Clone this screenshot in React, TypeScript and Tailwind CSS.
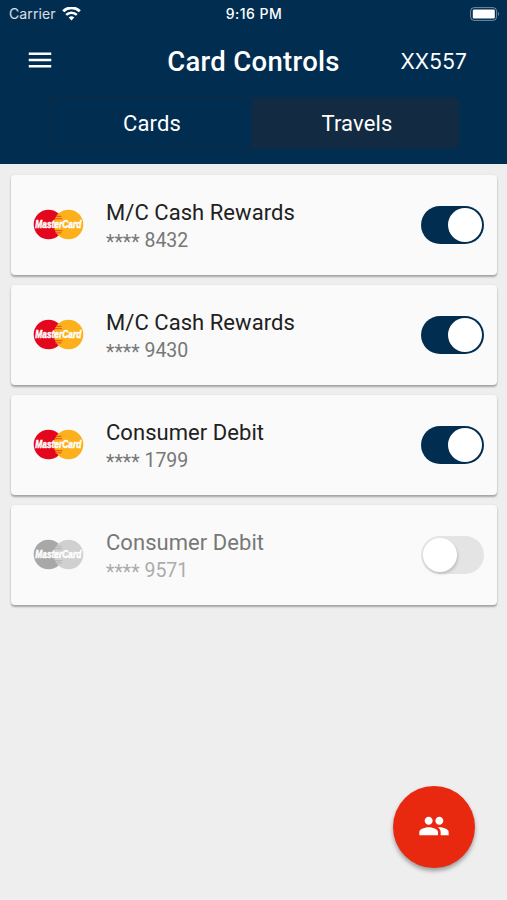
import React, { useState } from 'react';
import { MdMenu, MdPeople } from 'react-icons/md';

interface Card {
  name: string;
  digits: string;
  active: boolean;
}

const initialCards: Card[] = [
  { name: 'M/C Cash Rewards', digits: '8432', active: true },
  { name: 'M/C Cash Rewards', digits: '9430', active: true },
  { name: 'Consumer Debit', digits: '1799', active: true },
  { name: 'Consumer Debit', digits: '9571', active: false },
];

const StatusBar: React.FC = () => (
  <div className="grid grid-cols-3 items-center h-[27px] pl-[9px] pr-[7px] text-[14px]">
    <div className="flex items-center gap-[6px]">
      <span className="font-['Inter',sans-serif] text-[14px] tracking-[0.1px] text-white/85">Carrier</span>
      <svg width="19" height="14" viewBox="0 0 19 14" fill="none" stroke="white" strokeWidth="2.9">
        <path d="M1.2 4.2a12 12 0 0 1 16.6 0" />
        <path d="M4.2 7.8a7.6 7.6 0 0 1 10.6 0" strokeWidth="2.5" />
        <path d="M9.5 13.4 6.7 10.5a4 4 0 0 1 5.6 0z" fill="white" stroke="none" />
      </svg>
    </div>
    <span className="pr-px text-center font-['Inter',sans-serif] text-[14px] font-medium tracking-[0.5px]">
      9:16 PM
    </span>
    <svg className="justify-self-end" width="30" height="14" viewBox="0 0 30 14">
      <rect x="0.6" y="0.6" width="26" height="12.8" rx="3.6" fill="none" stroke="#fff" strokeOpacity="0.45" />
      <rect x="2.8" y="2.4" width="22" height="9.2" rx="1.4" fill="#fff" />
      <path d="M28 4.8q2 2.2 0 4.4z" fill="#fff" fillOpacity="0.45" />
    </svg>
  </div>
);

const MasterCardLogo: React.FC<{ active: boolean }> = ({ active }) => {
  const left = active ? '#e3061c' : '#a8a8a8';
  const right = active ? '#fbb01c' : '#d0d0d0';
  return (
    <svg width="52" height="32" viewBox="0 0 52 32" className="shrink-0 overflow-visible">
      <circle cx="15.5" cy="15.5" r="14.8" fill={left} />
      <circle cx="35.5" cy="15.5" r="14.8" fill={right} />
      {/* interlocking stripes between the two circles */}
      <path
        d="M23 7.4h5.5M22 9.6h7M22 21.6h7.4M22.5 23.8h6"
        stroke={active ? '#ee5c18' : '#b8b8b8'}
        strokeWidth="1.2"
      />
      <text
        x="25.3"
        y="19"
        textAnchor="middle"
        textLength="46"
        lengthAdjust="spacingAndGlyphs"
        className="font-['Liberation_Sans',sans-serif] font-bold italic"
        fontSize="10.4"
        stroke="white"
        strokeWidth="0.5"
        fill="white"
      >
        MasterCard
      </text>
    </svg>
  );
};

const Toggle: React.FC<{ active: boolean; label: string; onToggle: () => void }> = ({ active, label, onToggle }) => (
  <button
    type="button"
    role="switch"
    aria-checked={active}
    aria-label={label}
    onClick={onToggle}
    className={`flex items-center w-[63px] h-[38px] shrink-0 rounded-full p-[2px] ${
      active ? 'justify-end bg-[#012d50]' : 'justify-start bg-[#e4e4e4]'
    }`}
  >
    <span className={`size-[34px] rounded-full bg-white ${active ? '' : 'shadow-[1px_2px_3px_rgba(0,0,0,0.16)]'}`} />
  </button>
);

export default function App() {
  const [cards, setCards] = useState(initialCards);
  const [tab, setTab] = useState('Cards');

  const toggleCard = (index: number) =>
    setCards(cards.map((card, i) => (i === index ? { ...card, active: !card.active } : card)));

  return (
    <div className="relative h-[900px] w-full overflow-hidden bg-[#eeeeee] font-['Roboto',sans-serif]">
      <header className="h-[164px] bg-[#012d50] text-white">
        <StatusBar />
        <div className="grid grid-cols-[152px_1fr_152px] items-center h-[68px]">
          <button type="button" aria-label="Menu" className="ml-[25px] mb-[3px] w-[30px]">
            <MdMenu size={30} />
          </button>
          <h1 className="pt-[2px] text-center text-[27.5px] leading-[32px] font-medium tracking-[0.3px] whitespace-nowrap">
            Card Controls
          </h1>
          <span className="pt-[2px] pr-[40px] text-right font-['Inter',sans-serif] text-[21px] tracking-[0.1px]">
            XX557
          </span>
        </div>
        <div className="flex h-[52px] ml-[50px] mr-[47px] mt-[2px] rounded-[4px] border-2 border-[#0c2b47] overflow-hidden">
          {['Cards', 'Travels'].map((name) => (
            <button
              key={name}
              type="button"
              onClick={() => setTab(name)}
              className={`text-[22px] tracking-[0.15px] ${name === 'Cards' ? 'w-[200px]' : 'flex-1 pl-[4px]'} ${
                tab === name ? 'bg-[#012d50]' : 'bg-[#122b42]'
              }`}
            >
              {name}
            </button>
          ))}
        </div>
      </header>

      <main className="flex flex-col gap-[10px] px-[10.5px] pt-[10.5px]">
        {cards.map((card, index) => (
          <section
            key={card.digits}
            className="flex items-center h-[100px] rounded-[4px] bg-[#fafafa] pl-[22px] pr-[13px] shadow-[0_2px_2px_rgba(0,0,0,0.3),0_0_2px_rgba(0,0,0,0.08)]"
          >
            <MasterCardLogo active={card.active} />
            <div className={`flex-1 pl-[21.5px] pt-[4px] ${card.active ? '' : 'opacity-60'}`}>
              <h2 className="text-[22px] leading-[28px] tracking-[0.05px] text-[#212121]">{card.name}</h2>
              <p className="text-[19.5px] leading-[28px] text-[#777777]">
                <span className="relative top-[2px]">****</span> {card.digits}
              </p>
            </div>
            <Toggle active={card.active} label={`${card.name} ${card.digits}`} onToggle={() => toggleCard(index)} />
          </section>
        ))}
      </main>

      <button
        type="button"
        aria-label="Shared users"
        className="absolute right-[32px] bottom-[32px] flex items-center justify-center size-[82px] rounded-full bg-[#e9290f] pb-[2px] text-white shadow-[0_3px_4px_rgba(0,0,0,0.35)]"
      >
        <MdPeople size={32} />
      </button>
    </div>
  );
}
